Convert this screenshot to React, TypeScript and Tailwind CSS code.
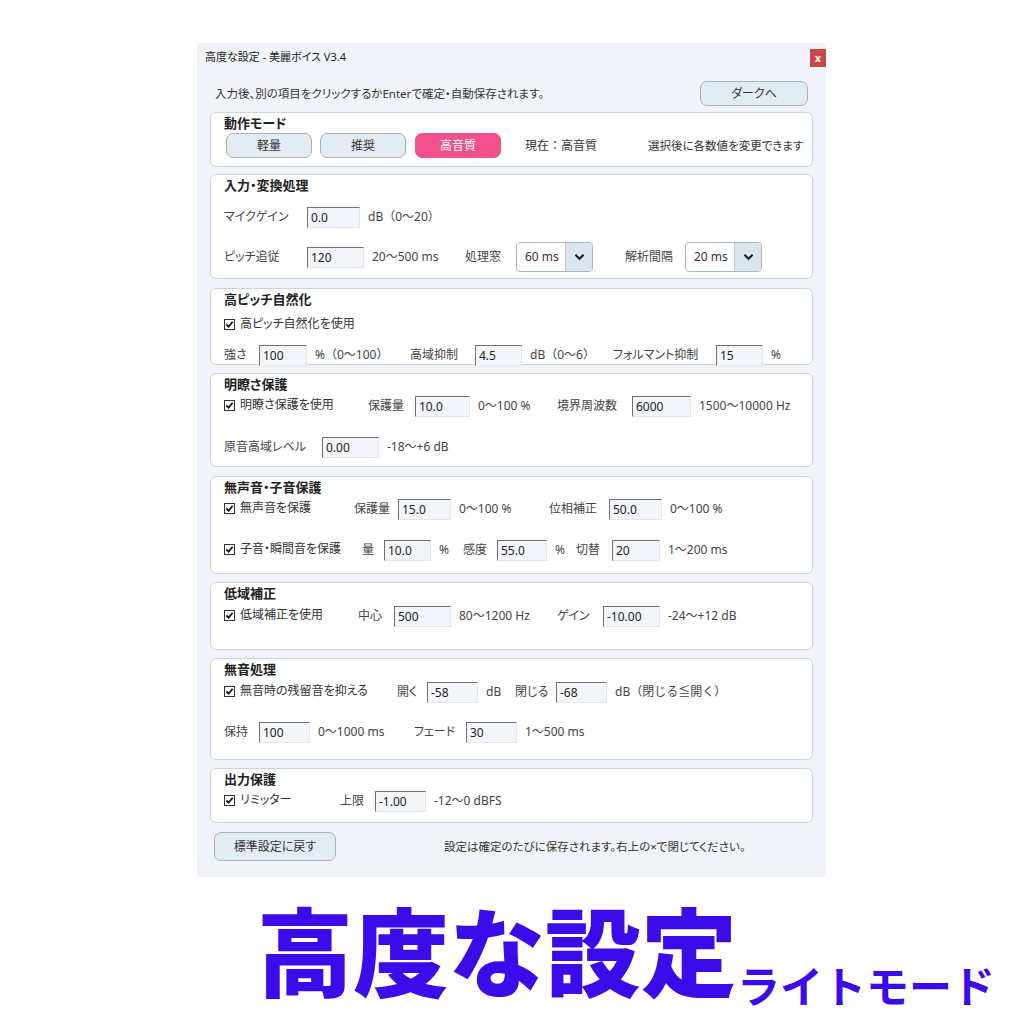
import type { ReactNode } from 'react';

const jp = "font-['Noto_Sans','Noto_Sans_CJK_JP',sans-serif] [font-feature-settings:'palt']";

const Field = ({ v, w }: { v: string; w: string }) => (
  <div
    className={`${w} h-[21px] shrink-0 bg-[#f2f5f9] border-t border-l border-t-[#707070] border-l-[#707070] border-r border-b border-r-[#e2e7ed] border-b-[#e2e7ed] pl-[3px] text-[12px] leading-[19px] text-[#222]`}
  >
    {v}
  </div>
);

const Label = ({ t, w }: { t: string; w: string }) => (
  <span className={`${w} shrink-0 text-[12px] text-[#444] whitespace-nowrap`}>{t}</span>
);

const Unit = ({ t, w = '' }: { t: string; w?: string }) => (
  <span className={`${w} shrink-0 pl-[8px] text-[12px] text-[#444] whitespace-nowrap [font-feature-settings:normal]`}>{t}</span>
);

const Check = ({ t, w }: { t: string; w: string }) => (
  <span className={`${w} shrink-0 flex items-center self-start mt-[1px] text-[12px] text-[#333] whitespace-nowrap`}>
    <span className="w-[11px] h-[11px] border border-[#333] bg-white flex items-center justify-center">
      <svg viewBox="0 0 10 10" className="w-[9px] h-[9px]">
        <path d="M1.5 5 L4 7.5 L8.5 2" fill="none" stroke="#111" strokeWidth="2" />
      </svg>
    </span>
    <span className="ml-[5px]">{t}</span>
  </span>
);

const Select = ({ v }: { v: string }) => (
  <div className="w-[77px] h-[30px] shrink-0 flex border border-[#a9b8c8] rounded-[4px] bg-white overflow-hidden">
    <span className="flex-1 pl-[8px] flex items-center text-[12px] text-[#333]">{v}</span>
    <span className="w-[27px] bg-[#dae5f0] border-l border-[#bccad8] flex items-center justify-center">
      <svg viewBox="0 0 12 8" className="w-[11px] h-[8px]">
        <path d="M1.5 1.5 L6 6 L10.5 1.5" fill="none" stroke="#1a1a1a" strokeWidth="2.2" />
      </svg>
    </span>
  </div>
);

const Section = ({ title, cls, children }: { title: string; cls: string; children: ReactNode }) => (
  <div className={`${cls} bg-white border border-[#c9d5e1] rounded-[6px] pl-[13px] pt-[2px]`}>
    <div className="text-[13px] leading-[16px] font-bold text-[#222]">{title}</div>
    {children}
  </div>
);

const Btn = ({ t, cls }: { t: string; cls: string }) => (
  <div className={`${cls} shrink-0 flex items-center justify-center rounded-[7px] text-[12px]`}>{t}</div>
);

export default function App() {
  return (
    <div className={`${jp} bg-white min-h-[1024px] w-[1024px] pt-[43px] overflow-hidden`}>
      <div className="ml-[197px] w-[629px] bg-[#f0f4f9] flex flex-col pb-[16px]">
        <div className="h-[29px] flex justify-between items-start">
          <span className="pl-[8px] mt-[6px] text-[11px] text-[#222]">高度な設定 - 美麗ボイス V3.4</span>
          <span className="mt-[6px] w-[16px] h-[18px] bg-[#c9494b] text-white text-[10px] font-bold flex items-center justify-center">
            x
          </span>
        </div>

        <div className="mt-[9px] flex items-center justify-between pl-[18px] pr-[18px]">
          <span className="text-[11.5px] text-[#333]">入力後、別の項目をクリックするかEnterで確定・自動保存されます。</span>
          <Btn t="ダークへ" cls="w-[108px] h-[25px] bg-[#e3ebf3] border border-[#a4b4c5] text-[#333]" />
        </div>

        <div className="mx-[13px] flex flex-col">
          <Section title="動作モード" cls="mt-[6px] h-[55px]">
            <div className="mt-[2px] ml-[2px] h-[25px] flex items-center">
              <Btn t="軽量" cls="w-[86px] h-[25px] bg-[#e3ebf3] border border-[#a4b4c5] text-[#333]" />
              <Btn t="推奨" cls="ml-[8px] w-[86px] h-[25px] bg-[#e3ebf3] border border-[#a4b4c5] text-[#333]" />
              <Btn t="高音質" cls="ml-[9px] w-[86px] h-[25px] bg-[#f0508c] border border-[#f0508c] text-white" />
              <span className="ml-[24px] w-[123px] text-[12px] text-[#333] [font-feature-settings:normal]">現在：高音質</span>
              <span className="text-[11.5px] text-[#333]">選択後に各数値を変更できます</span>
            </div>
          </Section>

          <Section title="入力・変換処理" cls="mt-[7px] h-[105px]">
            <div className="mt-[13px] h-[22px] flex items-center">
              <Label t="マイクゲイン" w="w-[83px]" />
              <Field v="0.0" w="w-[53px]" />
              <Unit t="dB（0〜20）" />
            </div>
            <div className="mt-[14px] h-[30px] flex items-center">
              <Label t="ピッチ追従" w="w-[83px]" />
              <Field v="120" w="w-[57px]" />
              <Unit t="20〜500 ms" w="w-[101px]" />
              <Label t="処理窓" w="w-[51px]" />
              <Select v="60 ms" />
              <Label t="解析間隔" w="ml-[32px] w-[60px]" />
              <Select v="20 ms" />
            </div>
          </Section>

          <Section title="高ピッチ自然化" cls="mt-[9px] h-[77px]">
            <div className="mt-[7px] h-[16px] flex items-center">
              <Check t="高ピッチ自然化を使用" w="w-[200px]" />
            </div>
            <div className="mt-[14px] h-[22px] flex items-center">
              <Label t="強さ" w="w-[35px]" />
              <Field v="100" w="w-[48px]" />
              <Unit t="%（0〜100）" w="w-[103px]" />
              <Label t="高域抑制" w="w-[65px]" />
              <Field v="4.5" w="w-[47px]" />
              <Unit t="dB（0〜6）" w="w-[91px]" />
              <Label t="フォルマント抑制" w="w-[103px]" />
              <Field v="15" w="w-[47px]" />
              <Unit t="%" />
            </div>
          </Section>

          <Section title="明瞭さ保護" cls="mt-[8px] h-[94px]">
            <div className="mt-[3px] h-[22px] flex items-center">
              <Check t="明瞭さ保護を使用" w="w-[144px]" />
              <Label t="保護量" w="w-[47px]" />
              <Field v="10.0" w="w-[55px]" />
              <Unit t="0〜100 %" w="w-[87px]" />
              <Label t="境界周波数" w="w-[75px]" />
              <Field v="6000" w="w-[59px]" />
              <Unit t="1500〜10000 Hz" />
            </div>
            <div className="mt-[19px] h-[22px] flex items-center">
              <Label t="原音高域レベル" w="w-[98px]" />
              <Field v="0.00" w="w-[57px]" />
              <Unit t="-18〜+6 dB" />
            </div>
          </Section>

          <Section title="無声音・子音保護" cls="mt-[9px] h-[98px]">
            <div className="mt-[3px] h-[22px] flex items-center">
              <Check t="無声音を保護" w="w-[130px]" />
              <Label t="保護量" w="w-[44px]" />
              <Field v="15.0" w="w-[53px]" />
              <Unit t="0〜100 %" w="w-[98px]" />
              <Label t="位相補正" w="w-[60px]" />
              <Field v="50.0" w="w-[53px]" />
              <Unit t="0〜100 %" />
            </div>
            <div className="mt-[19px] h-[22px] flex items-center">
              <Check t="子音・瞬間音を保護" w="w-[138px]" />
              <Label t="量" w="w-[22px]" />
              <Field v="10.0" w="w-[47px]" />
              <Unit t="%" w="w-[32px]" />
              <Label t="感度" w="w-[34px]" />
              <Field v="55.0" w="w-[50px]" />
              <Unit t="%" w="w-[29px]" />
              <Label t="切替" w="w-[36px]" />
              <Field v="20" w="w-[48px]" />
              <Unit t="1〜200 ms" />
            </div>
          </Section>

          <Section title="低域補正" cls="mt-[8px] h-[68px]">
            <div className="mt-[4px] h-[22px] flex items-center">
              <Check t="低域補正を使用" w="w-[134px]" />
              <Label t="中心" w="w-[36px]" />
              <Field v="500" w="w-[57px]" />
              <Unit t="80〜1200 Hz" w="w-[106px]" />
              <Label t="ゲイン" w="w-[46px]" />
              <Field v="-10.00" w="w-[57px]" />
              <Unit t="-24〜+12 dB" />
            </div>
          </Section>

          <Section title="無音処理" cls="mt-[8px] h-[102px]">
            <div className="mt-[4px] h-[22px] flex items-center">
              <Check t="無音時の残留音を抑える" w="w-[173px]" />
              <Label t="開く" w="w-[30px]" />
              <Field v="-58" w="w-[51px]" />
              <Unit t="dB" w="w-[37px]" />
              <Label t="閉じる" w="w-[41px]" />
              <Field v="-68" w="w-[51px]" />
              <Unit t="dB（閉じる≦開く）" />
            </div>
            <div className="mt-[18px] h-[22px] flex items-center">
              <Label t="保持" w="w-[35px]" />
              <Field v="100" w="w-[51px]" />
              <Unit t="0〜1000 ms" w="w-[104px]" />
              <Label t="フェード" w="w-[52px]" />
              <Field v="30" w="w-[51px]" />
              <Unit t="1〜500 ms" />
            </div>
          </Section>

          <Section title="出力保護" cls="mt-[8px] h-[55px]">
            <div className="mt-[3px] h-[22px] flex items-center">
              <Check t="リミッター" w="w-[116px]" />
              <Label t="上限" w="w-[35px]" />
              <Field v="-1.00" w="w-[51px]" />
              <Unit t="-12〜0 dBFS" />
            </div>
          </Section>
        </div>

        <div className="mt-[9px] ml-[17px] flex items-center">
          <Btn t="標準設定に戻す" cls="w-[122px] h-[29px] bg-[#e3ebf3] border border-[#a4b4c5] text-[#333]" />
          <span className="ml-[108px] text-[11.5px] text-[#333]">設定は確定のたびに保存されます。右上の×で閉じてください。</span>
        </div>
      </div>

      <div className="mt-[25px] ml-[257px] flex items-end">
        <span className="text-[96px] leading-[100px] font-black text-[#3b0ce9] [font-feature-settings:normal] whitespace-nowrap">高度な設定</span>
        <span className="mb-[-9px] text-[43px] leading-[48px] font-bold text-[#3b0ce9] [font-feature-settings:normal] whitespace-nowrap">ライトモード</span>
      </div>
    </div>
  );
}
